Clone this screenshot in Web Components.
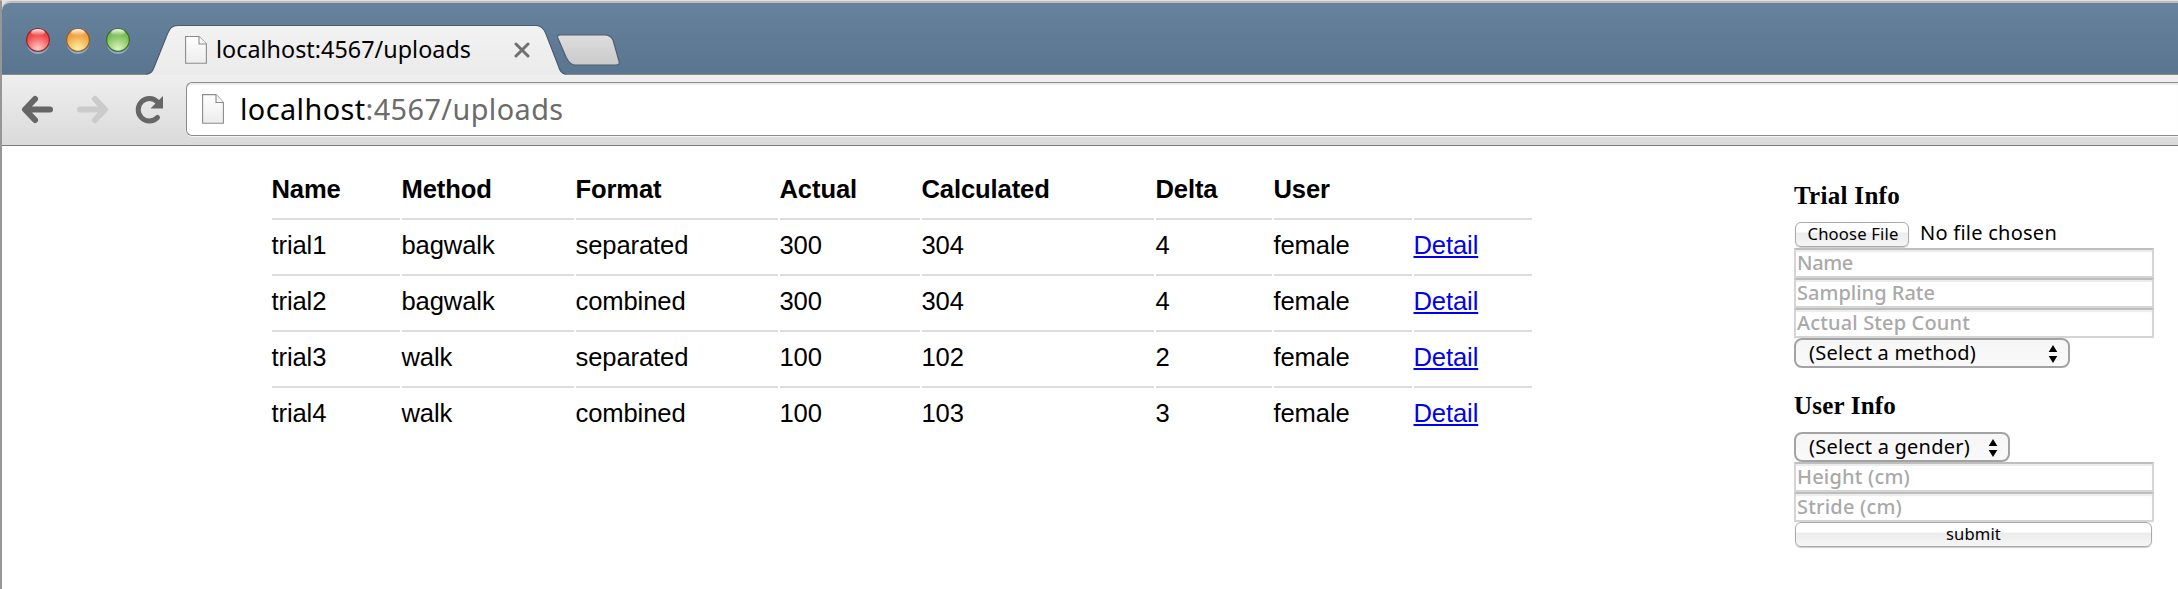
<!DOCTYPE html>
<html lang="en">
<head>
<meta charset="utf-8">
<title>localhost:4567/uploads</title>
<style>
html,body{margin:0;height:100%;overflow:hidden;background:#fff}
body{font-family:"Noto Sans","Open Sans",sans-serif;color:#000}
</style>
</head>
<body>
<browser-window>
  <tab-strip slot="tabs"></tab-strip>
  <nav-toolbar slot="toolbar"></nav-toolbar>
  <trial-table></trial-table>
  <trial-form></trial-form>
</browser-window>
<script>
const define = (name, html, setup) => customElements.define(name, class extends HTMLElement {
  connectedCallback() {
    if (this.shadowRoot) return;
    this.attachShadow({ mode: 'open' }).innerHTML = html;
    if (setup) setup(this, this.shadowRoot);
  }
});

// A single line of text tracked so that it spans the given width.
define('fit-text', `<style>:host{display:block;white-space:nowrap}span{display:inline-block}</style><span><slot></slot></span>`, (el, root) => {
  el.style.fontSize = el.getAttribute('size') + 'px';
  const span = root.querySelector('span');
  const want = +el.getAttribute('width');
  const n = el.textContent.length;
  span.style.letterSpacing = (want - span.getBoundingClientRect().width) / n + 'px';
});

define('page-icon', `<style>:host{display:block}svg{display:block;width:100%;height:100%}</style>
<svg viewBox="0 0 22 30" preserveAspectRatio="none"><defs><linearGradient id="g" x2="0" y2="1"><stop stop-color="#fff"/><stop offset="1" stop-color="#ececec"/></linearGradient></defs>
<path d="M.6 .6H14L21.4 8.5V29.2H.6Z" fill="url(#g)" stroke="#8c8c8c" stroke-width="1.1"/><path d="M14 .6V8.5H21.4" fill="#f8f8f8" stroke="#8c8c8c" stroke-width="1.1"/></svg>`);

define('window-light', `<style>
:host{display:block;width:24px;height:25px}svg{display:block;overflow:visible}</style>
<svg width="24" height="27" viewBox="0 0 24 27"><defs>
<linearGradient id="t" x2="0" y2="1"><stop stop-color="#fff" stop-opacity=".9"/><stop offset="1" stop-color="#fff" stop-opacity="0"/></linearGradient>
<radialGradient id="b" cx=".5" cy=".9" r=".65"><stop class="glow"/><stop offset="1" class="body"/></radialGradient></defs>
<ellipse cx="12" cy="14" rx="11.5" ry="12" fill="#b8cbdc" opacity=".6"/>
<circle cx="12" cy="12" r="11.4" fill="url(#b)" class="ring" stroke-width="1.3"/>
<ellipse cx="12" cy="4.5" rx="6.8" ry="3.4" fill="url(#t)"/></svg>`, (el, root) => {
  const [body, ring, glow] = el.getAttribute('colors').split(' ');
  root.querySelector('.body').setAttribute('stop-color', body);
  root.querySelector('.glow').setAttribute('stop-color', glow);
  root.querySelector('.ring').setAttribute('stroke', ring);
});

define('tab-strip', `<style>
:host{display:flex;height:71px;border-top:2px solid #bdbdbd;background:linear-gradient(#67829d,#5a7590);border-bottom:1px solid #8b8b8b;border-top-left-radius:9px;position:relative}
.lights{display:flex;gap:16px;padding:25px 0 0 24px;width:120px;flex:none}
.tab{display:grid;width:424px;flex:none;height:72px;position:relative}
.tab>*{grid-area:1/1}
.tab svg{display:block}
.label{display:flex;align-items:flex-start;padding-left:39px}
page-icon{width:22px;height:28px;margin-top:33px}
fit-text{line-height:36px;margin:28px 0 0 9px}
.close{margin:39px 0 0 43px}
.new{margin:30px 0 0 -14px;position:relative}
</style>
<div class="lights"><window-light colors="#f04545 #8e2a32 #ffd0cc"></window-light><window-light colors="#efa13f #8f6230 #fff3a4"></window-light><window-light colors="#79bd56 #40702f #dcf6bd"></window-light></div>
<div class="tab">
<svg width="424" height="72" viewBox="146 3 424 72"><defs><linearGradient id="f" x2="0" y2="1"><stop stop-color="#f2f2f2"/><stop offset="1" stop-color="#ebebeb"/></linearGradient></defs>
<path d="M146 75V74.5C152 74 153 70 155 65L167 35C170 28 172 25.8 178 25.8H536C541 25.8 544 29 546 34L558 65C560 71 561.500 74 566 74.500V75Z" fill="url(#f)"/>
<path d="M146 74.200C152 74 153 70 155 65L167 35C170 28 172 25.500 178 25.500H536C541 25.500 544 29 546 34L558 65C560 71 561.500 74 566 74.200" fill="none" stroke="#4b5968" stroke-width="1.1"/></svg>
<div class="label"><page-icon></page-icon><fit-text size="23.3" width="255">localhost:4567/uploads</fit-text>
<svg class="close" width="16" height="16"><path d="M2 2L14 14M14 2L2 14" stroke="#707070" stroke-width="3" stroke-linecap="round"/></svg></div>
</div>
<svg class="new" width="66" height="35" viewBox="556 33 66 35"><defs><linearGradient id="n" x2="0" y2="1"><stop stop-color="#dedede"/><stop offset="1" stop-color="#c9c9c9"/></linearGradient></defs>
<path d="M560 34.800H605C609 34.800 611.500 37 613 40L619 61C620 64 618.500 65.200 616 65.200H576C571 65.200 568.500 62 566.500 58L557.800 38C557 36 558 34.800 560 34.800Z" fill="url(#n)" stroke="#4e5f70" stroke-width="1.2"/></svg>`);

define('nav-toolbar', `<style>
:host{display:flex;height:70px;background:linear-gradient(#efefef,#dadada);border-bottom:1px solid #7a7a7a}
.icons{width:184px;flex:none}
.icons svg{display:block}
.bar{flex:1;box-sizing:border-box;height:54px;margin:7px 0 0;background:#fff;border:1px solid #8c8c8c;border-right:0;border-radius:6px 0 0 6px;box-shadow:inset 0 2px 1px #ebebeb,0 1px 0 #f5f5f5;display:flex;align-items:center;padding-left:15px}
page-icon{width:22px;height:30px}
fit-text{line-height:52px;margin-left:16px}
.dim{color:#6b6b6b}
</style>
<div class="icons"><svg width="184" height="70" viewBox="2 75 184 70" fill="none" stroke-linecap="round">
<path d="M35 99L25 109.500L35 120M26 109.500H50" stroke="#666" stroke-width="6" stroke-linejoin="round"/>
<path d="M95 99L105 109.500L95 120M104 109.500H80" stroke="#cbcbcb" stroke-width="6" stroke-linejoin="round"/>
<path d="M157.500 117.500A11.200 11.200 0 1 1 157.500 102" stroke="#666" stroke-width="5"/><path d="M163 96V108.500H150.500Z" fill="#666"/></svg></div>
<div class="bar"><page-icon></page-icon><fit-text size="28.8" width="323.500"><span>localhost</span><span style="color:#6b6b6b">:4567/uploads</span></fit-text></div>`);

define('trial-table', `<style>
:host{display:grid;grid-template-columns:128px 172px 202px 140px 232px 116px 138px 118px;gap:2px;font:25.6px/50px "Liberation Sans",Arial,sans-serif;align-content:start}
div{border-top:2px solid #ddd;height:52px;white-space:nowrap;letter-spacing:-.12px;text-indent:-.5px}
div.h{border-color:transparent;font-weight:bold}
a{color:#00e;text-decoration:underline;text-decoration-thickness:2px;text-underline-offset:2px}
</style>`, (el, root) => {
  const rows = [['Name','Method','Format','Actual','Calculated','Delta','User',''],
    ['trial1','bagwalk','separated','300','304','4','female','Detail'],
    ['trial2','bagwalk','combined','300','304','4','female','Detail'],
    ['trial3','walk','separated','100','102','2','female','Detail'],
    ['trial4','walk','combined','100','103','3','female','Detail']];
  rows.forEach((row, r) => row.forEach(text => {
    const cell = document.createElement('div');
    if (!r) cell.className = 'h';
    if (text === 'Detail') {
      const a = document.createElement('a');
      a.href = '#'; a.textContent = text; cell.append(a);
    } else cell.textContent = text;
    root.append(cell);
  }));
});

define('text-field', `<style>
:host{display:block;box-sizing:border-box;width:360px;height:30px;border:2px solid #d5d5d5;border-top-color:#bebebe;box-shadow:inset 0 2px 1px #ececec;padding-left:1px;color:#a9a9a9;line-height:25px;font-weight:500}
</style><slot></slot>`);

define('select-box', `<style>
:host{display:flex;box-sizing:border-box;height:30px;border:2px solid #a3a3a3;border-radius:8px;background:linear-gradient(#f6f6f6,#f9f9f9);line-height:25px;padding:0 10px 0 13px;justify-content:space-between}
svg{display:block;margin-top:4px}
</style><slot></slot><svg width="10" height="20"><path d="M5 1L9.300 8H.7ZM5 19L9.300 12H.7Z"/></svg>`);

define('push-button', `<style>
:host{display:flex;box-sizing:border-box;height:25px;border:1.5px solid #aaa;border-radius:6px;background:linear-gradient(#fff 0 38%,#ececec 45%,#f6f6f6);line-height:22px;justify-content:center;box-shadow:0 1px 1px #ccc}
</style><slot></slot>`);

define('trial-form', `<style>
:host{display:block;width:360px}
h3{font:bold 25px/30px "Liberation Serif","Times New Roman",serif;margin:0}
.file{display:flex;height:26px;align-items:flex-start}
.file push-button{width:114px;margin-left:1px;padding-left:2px}
.file>fit-text{line-height:22px;margin-left:11px}
.first{margin-top:35px}
.second{margin:23px 0 11px}
</style>
<h3 class="first"><fit-text size="25" width="106">Trial Info</fit-text></h3>
<div class="file" style="margin-top:11px"><push-button><fit-text size="16.6" width="91">Choose File</fit-text></push-button><fit-text size="20" width="137">No file chosen</fit-text></div>
<text-field><fit-text size="20" width="56">Name</fit-text></text-field>
<text-field><fit-text size="20" width="138">Sampling Rate</fit-text></text-field>
<text-field><fit-text size="20" width="173">Actual Step Count</fit-text></text-field>
<select-box style="width:276px"><fit-text size="20" width="167">(Select a method)</fit-text></select-box>
<h3 class="second"><fit-text size="25" width="102">User Info</fit-text></h3>
<select-box style="width:216px"><fit-text size="20" width="161">(Select a gender)</fit-text></select-box>
<text-field><fit-text size="20" width="113">Height (cm)</fit-text></text-field>
<text-field><fit-text size="20" width="105">Stride (cm)</fit-text></text-field>
<push-button style="width:357px;margin-left:1px"><fit-text size="16.6" width="55">submit</fit-text></push-button>`);

define('browser-window', `<style>
:host{display:flex;flex-direction:column;box-sizing:border-box;height:589px;border-top:1px solid #e0e0e0;border-left:2px solid #969696;background:#fff}
.top{background:#e0e0e0}
main{display:flex;justify-content:space-between;flex:1;padding:0 24px 0 270px}
::slotted(trial-table){margin-top:16px}
</style><div class="top"><slot name="tabs"></slot></div><slot name="toolbar"></slot><main><slot></slot></main>`);
</script>
</body>
</html>
